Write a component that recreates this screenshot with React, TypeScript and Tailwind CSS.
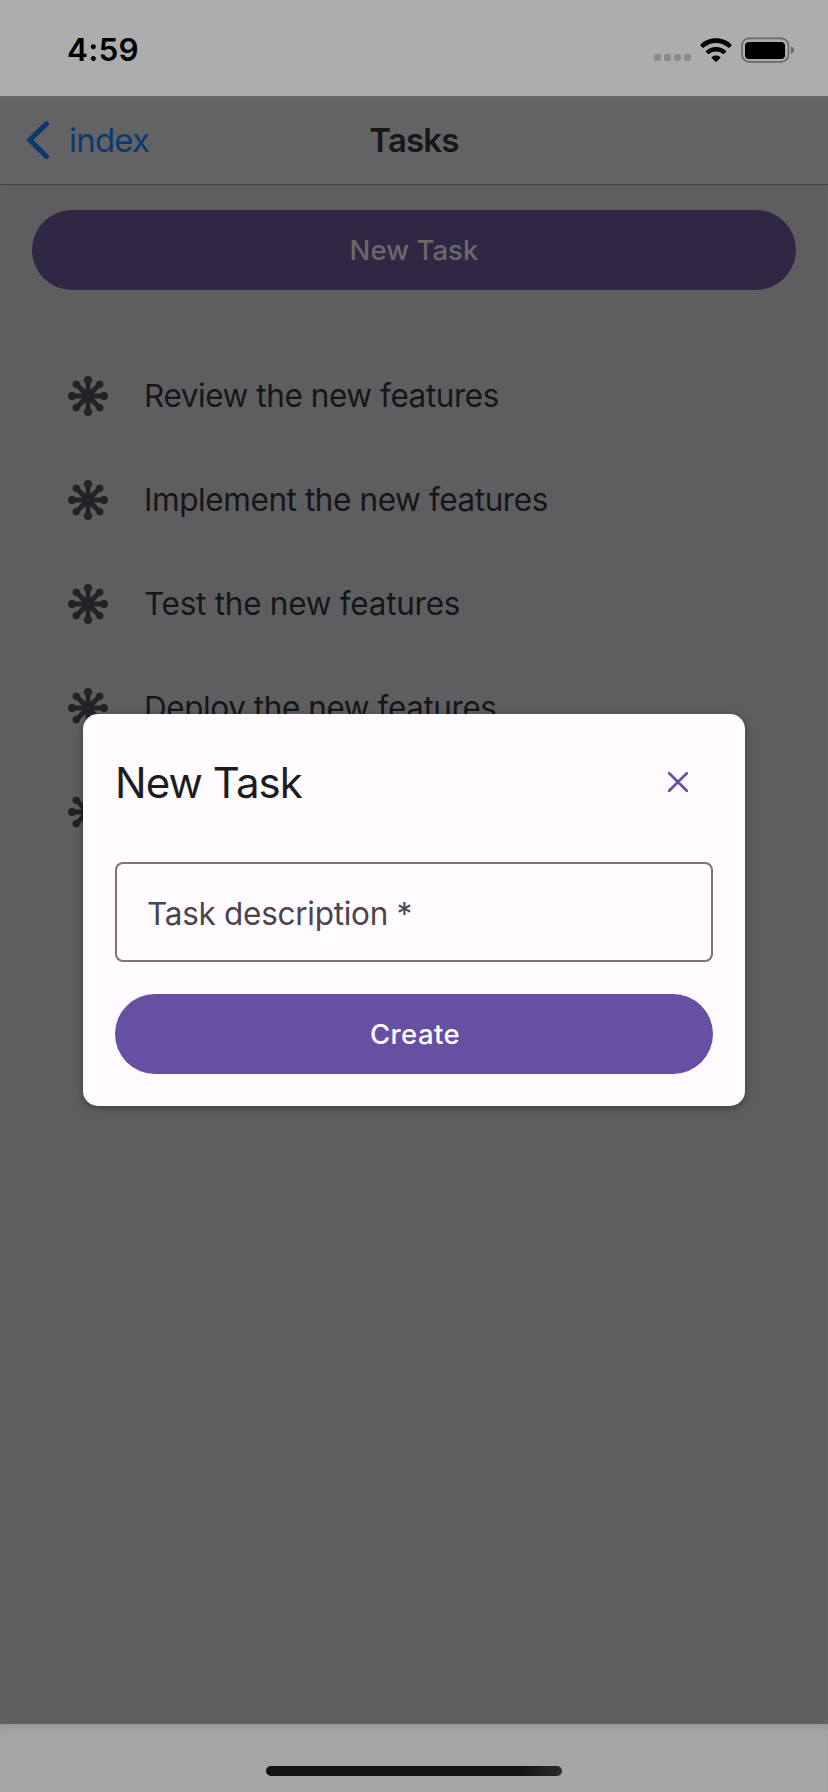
const tasks = [
  { text: "Review the new features", tracking: "tracking-[-0.43px]" },
  { text: "Implement the new features", tracking: "tracking-[-0.41px]" },
  { text: "Test the new features", tracking: "tracking-[-0.26px]" },
  { text: "Deploy the new features", tracking: "tracking-[-0.43px]" },
  { text: "", tracking: "tracking-normal" },
];

function TaskIcon() {
  return (
    <svg viewBox="-24 -24 48 48" className="size-12 shrink-0 text-[#242227]" stroke="currentColor" fill="currentColor">
      <path d="M0-16V16M-16 0H16" strokeWidth="4.8" />
      <path d="M-11.7-11.7 11.7 11.7M11.7-11.7-11.7 11.7" strokeWidth="5" />
      <g stroke="none">
        <circle r="6" />
        <circle cy="-16" r="4" />
        <circle cy="16" r="4" />
        <circle cx="-16" r="4" />
        <circle cx="16" r="4" />
        <circle cx="-11.7" cy="-11.7" r="3.7" />
        <circle cx="11.7" cy="-11.7" r="3.7" />
        <circle cx="-11.7" cy="11.7" r="3.7" />
        <circle cx="11.7" cy="11.7" r="3.7" />
      </g>
    </svg>
  );
}

function StatusBar() {
  return (
    <div className="flex h-24 shrink-0 items-center justify-between bg-[#adadaf] pr-[33px] pl-[67px] text-black">
      <span className="mt-[3px] text-[31.5px] leading-10 font-semibold tracking-[0.2px]">4:59</span>
      <div className="mt-[3px] flex items-center">
        <div className="mt-4 flex gap-[3px]">
          <i className="size-[7px] rounded-[2px] bg-[#8b8b8d]" />
          <i className="size-[7px] rounded-[2px] bg-[#8b8b8d]" />
          <i className="size-[7px] rounded-[2px] bg-[#8b8b8d]" />
          <i className="size-[7px] rounded-[2px] bg-[#8b8b8d]" />
        </div>
        <svg viewBox="0 0 32 24" className="ml-[9px] h-6 w-8" fill="currentColor">
          <path d="M16 0.3C22.2 0.3 27.7 2.7 31.4 6.4Q32 7 31.4 7.7L29.5 9.6Q28.9 10.2 28.2 9.6C25 6.6 20.7 4.9 16 4.9S7 6.6 3.8 9.6Q3.1 10.2 2.5 9.6L0.6 7.7Q0 7 0.6 6.4C4.3 2.7 9.8 0.3 16 0.3Z" />
          <path d="M16 9C19.9 9 23.3 10.4 25.9 12.7Q26.5 13.3 25.9 13.9L24 15.8Q23.4 16.4 22.7 15.8C20.9 14.3 18.6 13.5 16 13.5S11.1 14.3 9.3 15.8Q8.6 16.4 8 15.8L6.1 13.9Q5.5 13.3 6.1 12.7C8.7 10.4 12.1 9 16 9Z" />
          <path d="M16 17.4C17.7 17.4 19.2 18 20.3 18.9Q20.9 19.5 20.3 20.1L16.7 23.6Q16 24.2 15.3 23.6L11.7 20.1Q11.1 19.5 11.7 18.9C12.8 18 14.3 17.4 16 17.4Z" />
        </svg>
        <svg viewBox="0 0 54 26" className="ml-[9px] h-[26px] w-[54px]">
          <rect x="0.9" y="1.4" width="46.6" height="23.4" rx="7.2" fill="none" stroke="#69696b" strokeWidth="1.7" />
          <rect x="4" y="5" width="40" height="17" rx="4" />
          <path d="M50 9.2C52 10 53.2 11.5 53.2 13.1S52 16.2 50 17Z" fill="#69696b" />
        </svg>
      </div>
    </div>
  );
}

export default function App() {
  return (
    <div className="relative flex h-[1792px] w-[828px] flex-col overflow-hidden bg-[#5e5e60] font-['Inter','Liberation_Sans',sans-serif]">
      <StatusBar />

      <div className="flex flex-1 flex-col shadow-[inset_0_0_12px_rgba(255,255,255,0.05)]">
        <header className="grid h-[89px] shrink-0 grid-cols-3 items-center border-b border-[#444446] bg-[#636365] shadow-[inset_0_6px_10px_-4px_rgba(255,255,255,0.06)]">
          <a className="flex items-center pl-[26px] text-[33px] leading-10 tracking-[-0.8px] text-[#0c3a70]">
            <svg viewBox="0 0 24 40" className="mr-[19px] h-10 w-6" fill="none" stroke="currentColor" strokeWidth="5.2" strokeLinecap="round" strokeLinejoin="round">
              <path d="M20.4 3.8 3.7 20 20.4 36.3" />
            </svg>
            index
          </a>
          <h1 className="text-center text-[33px] leading-10 font-semibold tracking-[-0.8px] text-[#171719]">Tasks</h1>
        </header>

        <main className="flex flex-col px-8 pt-[25px]">
          <button className="h-20 rounded-full bg-[#302744] pt-0.5 text-[27.5px] font-medium tracking-[0.05px] text-[#69696a]">
            New Task
          </button>
          <ul className="mt-[54px] pl-8">
            {tasks.map((task, i) => (
              <li key={i} className="flex h-[104px] items-center gap-8">
                <TaskIcon />
                <span className={`text-[31.5px] leading-10 whitespace-nowrap text-[#161618] ${task.tracking}`}>{task.text}</span>
              </li>
            ))}
          </ul>
        </main>
      </div>

      <footer className="flex h-[68px] shrink-0 justify-center bg-[#a5a5a7] pt-[42px] shadow-[inset_0_8px_10px_-6px_rgba(0,0,0,0.12)]">
        <div className="h-2.5 w-[296px] rounded-full bg-linear-to-r from-[#121212] from-85% to-[#2c2c2c]" />
      </footer>

      <section className="absolute top-[714px] left-[83px] flex w-[662px] flex-col rounded-[15px] bg-[#fffbff] p-8 shadow-[0_2px_6px_rgba(0,0,0,0.28),0_4px_14px_rgba(0,0,0,0.08)]">
        <div className="flex h-[72px] items-center justify-between">
          <h2 className="pt-px text-[42px] leading-[52px] tracking-[-0.93px] text-[#1c1b1f]">New Task</h2>
          <button className="flex w-[70px] justify-center text-[#6750a4]">
            <svg viewBox="0 0 24 24" className="size-6" stroke="currentColor" strokeWidth="2.7" strokeLinecap="round">
              <path d="M3.200 3.200 20.800 20.800M20.800 3.200 3.200 20.800" />
            </svg>
          </button>
        </div>
        <div className="mt-11 flex h-[100px] items-center rounded-lg border-2 border-[#79747e] pt-1 pl-[30px]">
          <span className="text-[31.5px] leading-10 tracking-[-0.28px] text-[#49454f]">Task description *</span>
        </div>
        <button className="mt-8 h-20 rounded-full bg-[#6750a4] pt-0.5 pl-0.5 text-[27.5px] font-medium tracking-[0.4px] text-white">
          Create
        </button>
      </section>
    </div>
  );
}
